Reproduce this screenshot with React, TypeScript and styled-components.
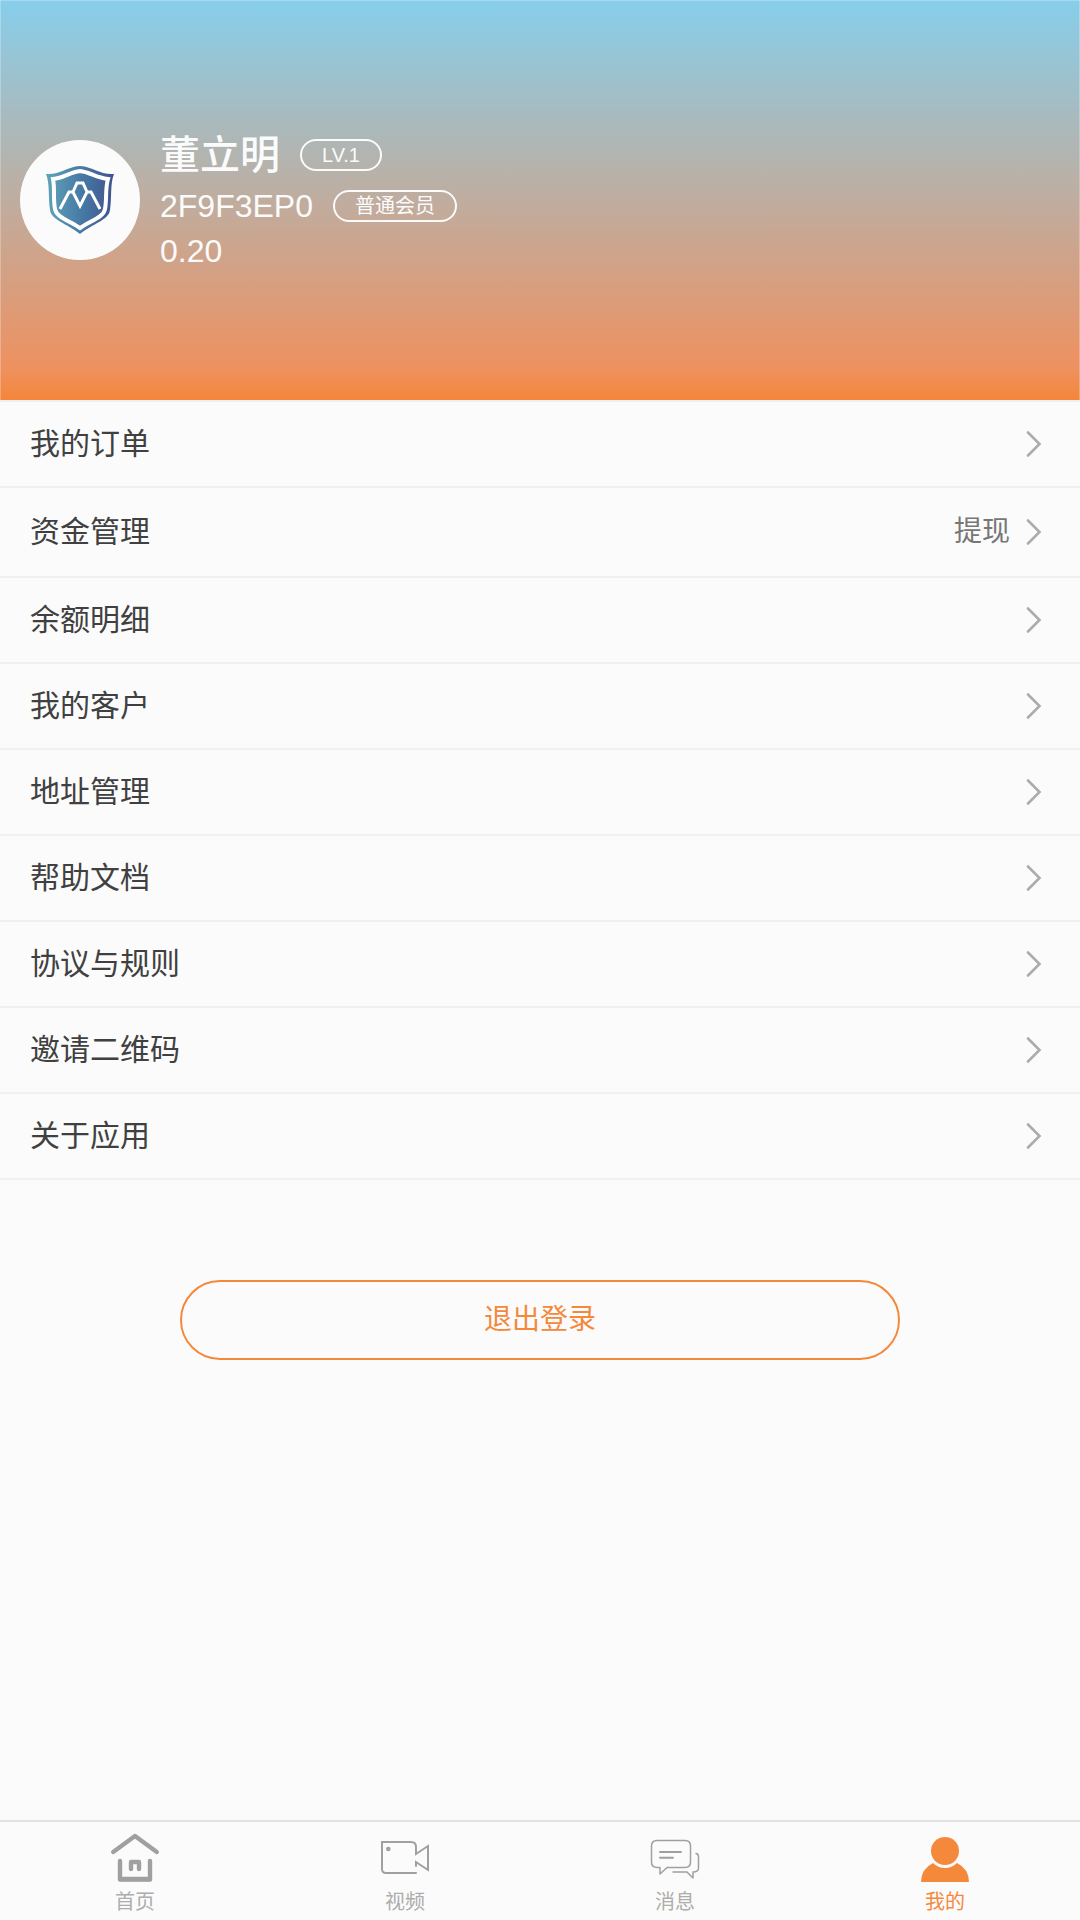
import React, { useState } from "react";
import styled, { createGlobalStyle } from "styled-components";

interface Item {
  title: string;
  note?: string;
}

interface Active {
  $active: boolean;
}

const items: Item[] = [
  { title: "我的订单" },
  { title: "资金管理", note: "提现" },
  { title: "余额明细" },
  { title: "我的客户" },
  { title: "地址管理" },
  { title: "帮助文档" },
  { title: "协议与规则" },
  { title: "邀请二维码" },
  { title: "关于应用" },
];

const Logo = () => (
  <svg width="72" height="72" viewBox="0 0 72 72" aria-hidden="true">
    <defs>
      <linearGradient id="shield" x1="0" y1="0" x2="1" y2="0">
        <stop offset="0" stopColor="#60a3b9" />
        <stop offset="0.5" stopColor="#477ca6" />
        <stop offset="1" stopColor="#41528e" />
      </linearGradient>
    </defs>
    <path
      d="M2 10C16 11 22 3 36 2C50 3 56 11 70 10C66 20 68 32 66 46C65 56 48 60 36 70C24 60 7 56 6 46C4 32 6 20 2 10Z"
      fill="url(#shield)"
    />
    <path
      d="M9 15C20 14 26 8 36 7C46 8 52 14 64 15C61 25 63 35 61 45C60 53 46 57 36 64C26 57 12 53 11 45C9 35 11 25 9 15Z"
      fill="none"
      stroke="#fff"
      strokeWidth="4"
    />
    <path
      d="M16 45L25 28H29L36 42L43 28H47L56 45M29 28L33 19H39L43 28"
      fill="none"
      stroke="#fff"
      strokeWidth="3"
    />
  </svg>
);

const Arrow = () => (
  <svg width="16" height="28" viewBox="0 0 16 28" aria-hidden="true">
    <path d="M2 2.5L13.5 14L2 25.5" fill="none" stroke="#acacae" strokeWidth="2.6" strokeLinecap="round" />
  </svg>
);

const HomeIcon = () => (
  <svg width="50" height="50" viewBox="0 0 50 50" aria-hidden="true">
    <g fill="none" stroke="currentColor" strokeWidth="4.4" strokeLinecap="round" strokeLinejoin="round">
      <path d="M3.2 20L25 4L46.8 20" />
      <path d="M10 29V47.5H40V29" />
      <path d="M10 47H40" />
      <path d="M21 37V30H29V37" />
    </g>
  </svg>
);

const VideoIcon = () => (
  <svg width="50" height="50" viewBox="0 0 50 50" aria-hidden="true">
    <g fill="none" stroke="currentColor" strokeWidth="2" strokeLinecap="round">
      <path d="M36 41H6Q2 41 2 37V10H31Q36 10 36 15V22L48 14V38L36 30V34" />
    </g>
    <circle cx="8.3" cy="17" r="2.3" fill="currentColor" />
  </svg>
);

const MessageIcon = () => (
  <svg width="50" height="50" viewBox="0 0 50 50" aria-hidden="true">
    <g fill="none" stroke="currentColor" strokeWidth="1.5" strokeLinecap="round" strokeLinejoin="round">
      <path d="M7 8.5H35Q40.5 8.5 40.5 14V30Q40.5 35.5 35 35.5H17L10 42V35.5H7Q1.5 35.5 1.5 30V14Q1.5 8.5 7 8.5Z" />
      <path d="M46 21.5Q48.5 21.5 48.5 25V36Q48.5 40 43 40V46L37 40H23" />
      <path d="M10 20H31M10 25.7H23" strokeWidth="2" />
    </g>
  </svg>
);

const UserIcon = () => (
  <svg width="50" height="50" viewBox="0 0 50 50" aria-hidden="true">
    <g fill="currentColor">
      <circle cx="25" cy="19" r="14" />
      <path d="M13 31Q18 36 25 36Q32 36 37 31Q49 37 49 50H1Q1 37 13 31Z" />
    </g>
  </svg>
);

const tabs = [
  { label: "首页", icon: <HomeIcon /> },
  { label: "视频", icon: <VideoIcon /> },
  { label: "消息", icon: <MessageIcon /> },
  { label: "我的", icon: <UserIcon /> },
];

const App = () => {
  const [active, setActive] = useState<number>(3);

  return (
    <Page>
      <GlobalStyle />
      <Header>
        <Avatar>
          <Logo />
        </Avatar>
        <Profile>
          <Line>
            <Name>董立明</Name>
            <Badge>LV.1</Badge>
          </Line>
          <Line>
            <Value>2F9F3EP0</Value>
            <Badge>普通会员</Badge>
          </Line>
          <Balance>0.20</Balance>
        </Profile>
      </Header>
      <Menu>
        {items.map((item) => (
          <li key={item.title}>
            <MenuLink href="#" $tall={!!item.note}>
              <Title>{item.title}</Title>
              {item.note && <Note>{item.note}</Note>}
              <Arrow />
            </MenuLink>
          </li>
        ))}
      </Menu>
      <Logout type="button">退出登录</Logout>
      <TabBar>
        {tabs.map((tab, index) => (
          <Tab
            key={tab.label}
            type="button"
            $active={active === index}
            onClick={() => setActive(index)}
          >
            {tab.icon}
            <TabLabel $active={active === index}>{tab.label}</TabLabel>
          </Tab>
        ))}
      </TabBar>
    </Page>
  );
};

export default App;

const GlobalStyle = createGlobalStyle`
  * {
    box-sizing: border-box;
  }

  body {
    margin: 0;
    background: #fbfbfb;
    color: #404040;
    font-family: "Liberation Sans", "Noto Sans CJK SC", sans-serif;
  }

  button {
    font-family: inherit;
    cursor: pointer;
  }

  svg {
    display: block;
    flex: none;
  }
`;

const Page = styled.div`
  display: flex;
  flex-direction: column;
  min-height: 100vh;
`;

const Header = styled.header`
  display: flex;
  align-items: center;
  gap: 20px;
  height: 400px;
  padding: 0 20px;
  background: linear-gradient(#87ceeb, #ee9160 92%, #f5863a);
  box-shadow: inset 1px 0 rgba(255, 255, 255, 0.25),
    inset -1px 0 rgba(255, 255, 255, 0.25),
    inset 0 1px rgba(255, 255, 255, 0.25);
  color: #fbfbfb;
`;

const Avatar = styled.div`
  display: flex;
  align-items: center;
  justify-content: center;
  width: 120px;
  height: 120px;
  border-radius: 50%;
  background: #fbfbfb;
`;

const Profile = styled.div`
  display: flex;
  flex-direction: column;
`;

const Line = styled.div`
  display: flex;
  align-items: center;
  gap: 20px;
`;

const Name = styled.span`
  font-size: 40px;
  line-height: 56px;
  font-weight: 500;
`;

const Value = styled.span`
  font-size: 32px;
  line-height: 46px;
`;

const Balance = styled(Value)`
  line-height: 44px;
`;

const Badge = styled.span`
  padding: 0 20px;
  border: 2px solid #fbfbfb;
  border-radius: 16px;
  font-size: 20px;
  line-height: 28px;
`;

const Menu = styled.ul`
  margin: 0;
  padding: 0;
  border-top: 2px solid #f0f0f0;
  list-style: none;
`;

const MenuLink = styled.a<{ $tall: boolean }>`
  display: flex;
  align-items: center;
  gap: 16px;
  height: ${(props) => (props.$tall ? "90px" : "86px")};
  padding: 0 38px 0 30px;
  border-bottom: 2px solid #f0f0f0;
  color: inherit;
  line-height: 44px;
  text-decoration: none;
`;

const Title = styled.span`
  flex: 1;
  font-size: 30px;
`;

const Note = styled.span`
  color: #777;
  font-size: 28px;
`;

const Logout = styled.button`
  width: 66.667%;
  height: 80px;
  margin: 100px auto;
  border: 2px solid #f5893b;
  border-radius: 40px;
  background: transparent;
  color: #f5893b;
  font-size: 28px;
  line-height: 44px;
`;

const TabBar = styled.nav`
  display: flex;
  height: 100px;
  margin-top: auto;
  border-top: 2px solid #e2e2e2;
`;

const Tab = styled.button<Active>`
  display: flex;
  flex: 1;
  flex-direction: column;
  align-items: center;
  padding: 10px 0 0;
  border: 0;
  background: transparent;
  color: ${(props) => (props.$active ? "#f5893b" : "#a0a0a0")};
`;

const TabLabel = styled.span<Active>`
  color: ${(props) => (props.$active ? "#f5893b" : "#adadad")};
  font-size: 20px;
  line-height: 40px;
`;
